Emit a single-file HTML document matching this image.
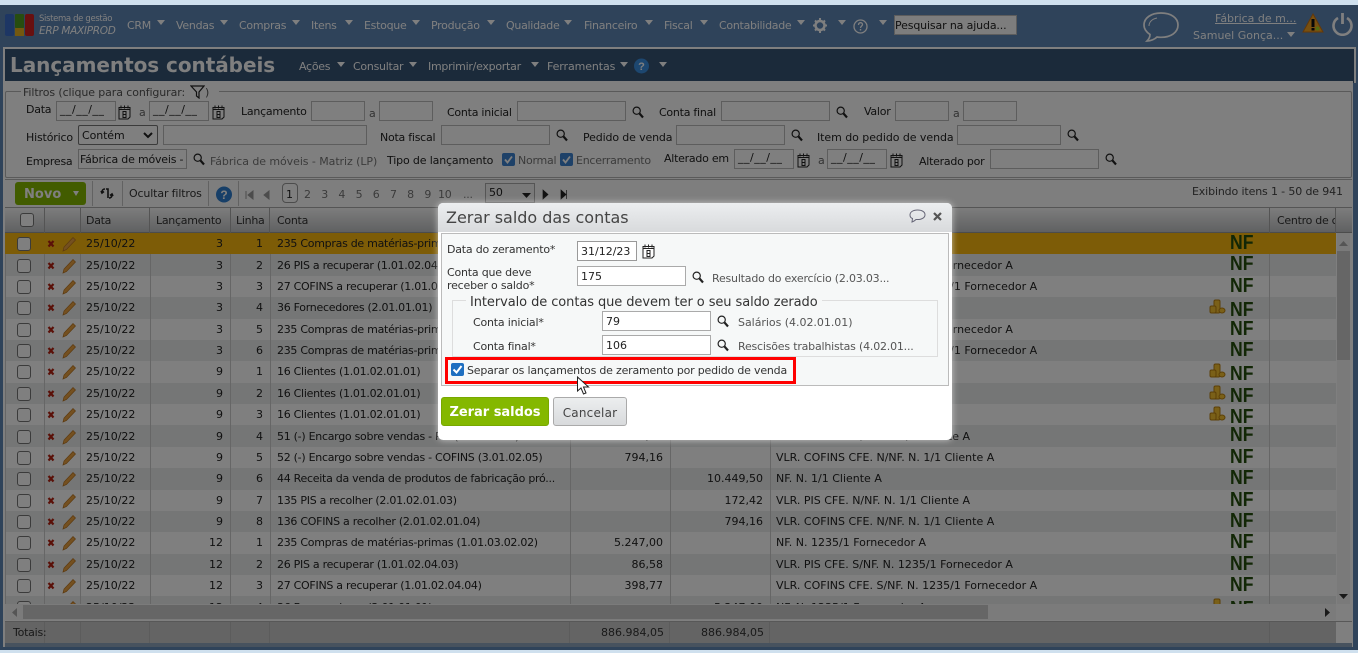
<!DOCTYPE html>
<html lang="pt"><head><meta charset="utf-8"><title>Lançamentos contábeis</title>
<style>
html,body{margin:0;padding:0;width:1358px;height:653px;overflow:hidden;background:#cfe0ee;font-family:"DejaVu Sans","Liberation Sans",sans-serif;font-size:11px;color:#222}
*{box-sizing:border-box}
.a,.i,.v,svg.s{position:absolute}
.a{white-space:nowrap;line-height:16px;letter-spacing:-.25px}
.i{background:#fff;border:1px solid #bbb;height:20px;padding:2px 3px 0;line-height:16px;letter-spacing:-.1px;white-space:nowrap;overflow:hidden}
.dt{padding-top:0;padding-left:3px;letter-spacing:.5px}
.v{width:0;height:0;border:4px solid transparent;border-top:5px solid #fff;border-bottom:0}
#nav{position:absolute;left:0;top:5px;width:1358px;height:645px;background:#5f86b4}
.m{color:#fff;top:18px;letter-spacing:-.28px}
.n{color:#fff;top:59px;letter-spacing:-.27px}
#ttl{position:absolute;left:3px;top:47px;width:1353px;height:36px;background:#365474;border:2px solid #fff;border-bottom:0}
#pan{position:absolute;left:3px;top:81px;width:1350px;height:566px;background:#fff;border-left:2px solid #fff}
#fs{position:absolute;left:5px;top:91px;width:1347px;height:87px;border:1px solid #b5b5b5;border-radius:2px}
#tb{position:absolute;left:5px;top:179px;width:1347px;height:28px;border-top:1px solid #b5b5b5;background:#fdfdfd}
.sp{position:absolute;top:181px;width:1px;height:25px;background:#c4c4c4}
#hd{position:absolute;left:5px;top:207px;width:1347px;height:26px;background:linear-gradient(#fafafa,#c0c2c4);border-top:1px solid #aaa;border-bottom:1px solid #999}
.hl{position:absolute;top:0;width:1px;height:25px;background:#a8a8a8}
.h{top:213px;color:#333;letter-spacing:-.28px}
#wrap{position:absolute;left:5px;top:233px;width:1331px;height:371px;overflow:hidden}
table{border-collapse:collapse;table-layout:fixed;width:1331px}
tr{height:21.38px}
td{padding:1px 6px 0;white-space:nowrap;overflow:hidden;border-left:1px solid #ccc;line-height:14px;letter-spacing:-.28px;position:relative}
td:nth-child(3){padding-left:5px;letter-spacing:0}
td.r{text-align:right;letter-spacing:0;padding-right:7px}
td.q{overflow:visible;letter-spacing:0;padding-left:5px}
tr:nth-child(even){background:#eaecec}
tr:nth-child(odd){background:#fff}
tr.y{background:#fab80f!important}
tr.y td{border-color:#fab80f}
td i{display:block;width:14px;height:14px;border:1px solid #777;border-radius:3px;background:#fff;margin-left:5px}
td svg{display:block;margin-left:-6px}
td b{position:absolute;left:459px;top:0;font:bold 20px/20px "Liberation Sans",sans-serif;color:#244f0c;transform:scaleX(.88);transform-origin:0 0}
td b.l{top:3px}
td svg.co{position:absolute;left:438px;top:2px;margin:0}
#ov{position:absolute;left:0;top:5px;width:1358px;height:645px;background:rgba(0,0,0,.5)}
#dl{position:absolute;left:438px;top:203px;width:514px;height:237px;background:#fff;border-radius:5px;box-shadow:0 0 7px rgba(255,255,255,.6)}
#dh{position:absolute;left:0;top:0;width:514px;height:29px;background:linear-gradient(#eceef0,#d8dadc);border-radius:5px 5px 0 0}
#dp{position:absolute;left:441px;top:233px;width:508px;height:153px;background:#f6f8f8;border:1px solid #bbb}
#df{position:absolute;left:452px;top:300px;width:486px;height:57px;border:1px solid #ddd}
.d{color:#333;letter-spacing:-.2px;font-size:11px;line-height:15px}
.inp{position:absolute;background:#fff;border:1px solid #aaa;height:20px;padding:0 3px;font-size:11px;line-height:19px;color:#222}
#lg{position:absolute;left:466px;top:295px;background:#f6f8f8;padding:0 4px;font-size:13px;line-height:16px;color:#333;white-space:nowrap;letter-spacing:-.08px}
</style></head><body>
<svg width="0" height="0" style="position:absolute">
<symbol id="lu" viewBox="0 0 12 13"><circle cx="4.7" cy="4.7" r="3.6" fill="none" stroke="#222" stroke-width="1.2"/><path d="M7.5 7.5L11 11.5" stroke="#222" stroke-width="2.2"/></symbol>
<symbol id="ca" viewBox="0 0 13 15"><path d="M1 2.5h11v9.5l-2 2H1z" fill="#fff" stroke="#222"/><path d="M3 .5v3M6.5 .5v3M10 .5v3M1 4.5h11" stroke="#222"/><path d="M5 6.5h3v6H5zM5 9.5h3" fill="none" stroke="#222"/></symbol>
<symbol id="act" viewBox="0 0 32 18"><path d="M3.5 6l5 5.5M8.500 6l-5 5.500" stroke="#b52010" stroke-width="2.200"/><path d="M18 16l1-4 9-9.500 2.500 2.500-9 9.500z" fill="#e8a040" stroke="#b97420" stroke-width=".7"/></symbol>
<symbol id="cn" viewBox="0 0 17 15"><rect x="5" y="1" width="6" height="13" rx="1.500" fill="#f5c030" stroke="#b98010"/><rect x="1" y="7" width="6" height="7" rx="1.500" fill="#f5c030" stroke="#b98010"/><ellipse cx="13" cy="11.500" rx="3" ry="2.500" fill="#f5c030" stroke="#b98010"/></symbol>
</svg>

<div id="nav"></div>
<svg class="s" style="left:5px;top:14px" width="29" height="23" viewBox="0 0 29 23"><rect x="0" y="0" width="9" height="22" rx="2" fill="#3a6cc8"/><rect x="10" y="0" width="9" height="14" rx="1" fill="#4e9b20"/><rect x="10" y="14" width="9" height="8" fill="#e8b020"/><rect x="20" y="0" width="9" height="22" rx="2" fill="#d02020"/></svg>
<div class="a m" style="left:39px;top:11px;font-size:8.500px;letter-spacing:-.35px">Sistema de gestão</div>
<div class="a m" style="left:39px;top:23px;font-size:10.500px;font-style:italic;letter-spacing:-.3px">ERP MAXIPROD</div>
<div class="a m" style="left:127px">CRM</div><div class="v" style="left:157px;top:20px"></div>
<div class="a m" style="left:176px">Vendas</div><div class="v" style="left:220px;top:20px"></div>
<div class="a m" style="left:239px">Compras</div><div class="v" style="left:292px;top:20px"></div>
<div class="a m" style="left:311px">Itens</div><div class="v" style="left:345px;top:20px"></div>
<div class="a m" style="left:364px">Estoque</div><div class="v" style="left:412px;top:20px"></div>
<div class="a m" style="left:431px">Produção</div><div class="v" style="left:487px;top:20px"></div>
<div class="a m" style="left:506px">Qualidade</div><div class="v" style="left:564px;top:20px"></div>
<div class="a m" style="left:584px">Financeiro</div><div class="v" style="left:645px;top:20px"></div>
<div class="a m" style="left:664px">Fiscal</div><div class="v" style="left:700px;top:20px"></div>
<div class="a m" style="left:719px">Contabilidade</div><div class="v" style="left:797px;top:20px"></div>
<svg class="s" style="left:812px;top:17px" width="16" height="17" viewBox="0 0 16 17"><circle cx="8" cy="8.500" r="4.500" fill="none" stroke="#fff" stroke-width="2.500"/><path d="M8 1v3M8 13v3M1 8.500h3M12 8.500h3M3 3.500l2 2M11 11.500l2 2M13 3.500l-2 2M5 11.500l-2 2" stroke="#fff" stroke-width="2"/></svg>
<div class="v" style="left:838px;top:20px"></div>
<svg class="s" style="left:853px;top:19px" width="15" height="15" viewBox="0 0 15 15"><circle cx="7.500" cy="7.500" r="6.500" fill="none" stroke="#fff" stroke-width="1.300"/><path d="M5.500 6c0-3 4-3 4-.5 0 1.500-2 1.500-2 3.500" fill="none" stroke="#fff" stroke-width="1.300"/><rect x="6.800" y="10" width="1.400" height="1.500" fill="#fff"/></svg>
<div class="v" style="left:879px;top:20px"></div>
<div class="i" style="left:894px;top:15px;width:123px;background:#fafafa;color:#222;padding-left:0;letter-spacing:-.14px">Pesquisar na ajuda...</div>
<svg class="s" style="left:1142px;top:11px" width="38" height="32" viewBox="0 0 38 32"><path d="M19 2C9 2 2 7 2 14c0 4 3 7.500 6 9.500 0 2-1 4.500-3 6.500 4 0 8-2 10-4 1.500.3 3 .3 4 .3 10 0 17-5 17-12.300S29 2 19 2z" fill="none" stroke="#fff" stroke-width="1.700"/><path d="M7 15c0-4 3-7 8-8" fill="none" stroke="#fff"/></svg>
<div class="a m" style="left:1215px;top:11px;text-decoration:underline;letter-spacing:0">Fábrica de m...</div>
<div class="a m" style="left:1193px;top:28px;letter-spacing:0">Samuel Gonça...</div><div class="v" style="left:1287px;top:32px"></div>
<svg class="s" style="left:1302px;top:13px" width="22" height="20" viewBox="0 0 22 20"><path d="M11 1L1 19h20z" fill="#f0a020" stroke="#c87010"/><path d="M11 6v8" stroke="#111" stroke-width="3"/><rect x="9.500" y="15" width="3" height="2.500" fill="#111"/><circle cx="15.500" cy="15.500" r="2" fill="#a8d820"/></svg>
<svg class="s" style="left:1331px;top:12px" width="23" height="24" viewBox="0 0 23 24"><path d="M7 6a9 9 0 1 0 9 0" fill="none" stroke="#fff" stroke-width="2.600"/><path d="M11.500 1v11" stroke="#fff" stroke-width="2.800"/></svg>

<div id="ttl"></div>
<div class="a" style="left:10px;top:52px;font-size:20px;line-height:26px;font-weight:bold;color:#fff;letter-spacing:-.05px">Lançamentos contábeis</div>
<div class="a n" style="left:299px">Ações</div><div class="v" style="left:337px;top:62px"></div>
<div class="a n" style="left:353px">Consultar</div><div class="v" style="left:409px;top:62px"></div>
<div class="a n" style="left:428px">Imprimir/exportar</div><div class="v" style="left:531px;top:62px"></div>
<div class="a n" style="left:547px;letter-spacing:-.1px">Ferramentas</div><div class="v" style="left:620px;top:62px"></div>
<svg class="s" style="left:634px;top:58px" width="15" height="16" viewBox="0 0 15 16"><circle cx="7.500" cy="8" r="7.500" fill="#3a8ee0"/><text x="7.500" y="12" font-size="11" font-weight="bold" fill="#fff" text-anchor="middle" font-family="Liberation Sans">?</text></svg>
<div class="v" style="left:659px;top:62px"></div>

<div id="pan"></div>
<div id="fs"></div>
<div class="a" style="left:21px;top:85px;background:#fff;padding:0 2px;width:198px;height:14px;color:#555;letter-spacing:-.1px">Filtros (clique para configurar:</div>
<svg class="s" style="left:190px;top:85px" width="15" height="14" viewBox="0 0 15 14"><path d="M1 1h13L9 7v6L6.500 11V7z" fill="none" stroke="#222" stroke-width="1.200"/></svg>
<div class="a" style="left:205px;top:85px;color:#555">)</div>

<div class="a" style="left:26px;top:102px">Data</div>
<div class="i dt" style="left:56px;top:101px;width:60px">__/__/__</div><svg class="s" style="left:118px;top:105px" width="13" height="15"><use href="#ca"/></svg>
<div class="a" style="left:139px;top:105px;color:#666">a</div>
<div class="i dt" style="left:149px;top:101px;width:60px">__/__/__</div><svg class="s" style="left:212px;top:105px" width="13" height="15"><use href="#ca"/></svg>
<div class="a" style="left:241px;top:104px">Lançamento</div>
<div class="i" style="left:311px;top:101px;width:54px"></div><div class="a" style="left:369px;top:106px;color:#666">a</div><div class="i" style="left:379px;top:101px;width:54px"></div>
<div class="a" style="left:447px;top:105px">Conta inicial</div>
<div class="i" style="left:517px;top:101px;width:109px"></div><svg class="s" style="left:632px;top:106px" width="12" height="13"><use href="#lu"/></svg>
<div class="a" style="left:659px;top:105px">Conta final</div>
<div class="i" style="left:721px;top:101px;width:109px"></div><svg class="s" style="left:836px;top:106px" width="12" height="13"><use href="#lu"/></svg>
<div class="a" style="left:864px;top:104px">Valor</div>
<div class="i" style="left:895px;top:101px;width:54px"></div><div class="a" style="left:953px;top:106px;color:#666">a</div><div class="i" style="left:963px;top:101px;width:54px"></div>

<div class="a" style="left:26px;top:130px;letter-spacing:-.17px">Histórico</div>
<div class="i" style="left:78px;top:125px;width:80px;border-color:#777;border-radius:2px">Contém</div>
<svg class="s" style="left:143px;top:132px" width="10" height="7"><path d="M1 1l4 4 4-4" fill="none" stroke="#222" stroke-width="2"/></svg>
<div class="i" style="left:163px;top:125px;width:204px"></div>
<div class="a" style="left:380px;top:130px">Nota fiscal</div>
<div class="i" style="left:441px;top:125px;width:109px"></div><svg class="s" style="left:556px;top:129px" width="12" height="13"><use href="#lu"/></svg>
<div class="a" style="left:583px;top:130px;letter-spacing:-.14px">Pedido de venda</div>
<div class="i" style="left:676px;top:125px;width:109px"></div><svg class="s" style="left:791px;top:129px" width="12" height="13"><use href="#lu"/></svg>
<div class="a" style="left:817px;top:130px;letter-spacing:-.06px">Item do pedido de venda</div>
<div class="i" style="left:957px;top:125px;width:104px"></div><svg class="s" style="left:1067px;top:129px" width="12" height="13"><use href="#lu"/></svg>

<div class="a" style="left:26px;top:154px">Empresa</div>
<div class="i" style="left:78px;top:149px;width:109px;padding-left:1px;letter-spacing:-.2px">Fábrica de móveis - Matriz</div><svg class="s" style="left:193px;top:153px" width="12" height="13"><use href="#lu"/></svg>
<div class="a" style="left:210px;top:154px;color:#777;letter-spacing:-.07px">Fábrica de móveis - Matriz (LP)</div>
<div class="a" style="left:387px;top:153px;letter-spacing:-.15px">Tipo de lançamento</div>
<svg class="s" style="left:502px;top:153px" width="13" height="13"><rect width="13" height="13" rx="2" fill="#3c82d0"/><path d="M3 6.500l2.500 3L10 3.500" fill="none" stroke="#fff" stroke-width="1.800"/></svg>
<div class="a" style="left:518px;top:153px;color:#777">Normal</div>
<svg class="s" style="left:560px;top:153px" width="13" height="13"><rect width="13" height="13" rx="2" fill="#3c82d0"/><path d="M3 6.500l2.500 3L10 3.500" fill="none" stroke="#fff" stroke-width="1.800"/></svg>
<div class="a" style="left:576px;top:153px;color:#777">Encerramento</div>
<div class="a" style="left:664px;top:151px">Alterado em</div>
<div class="i dt" style="left:734px;top:149px;width:60px">__/__/__</div><svg class="s" style="left:797px;top:153px" width="13" height="15"><use href="#ca"/></svg>
<div class="a" style="left:818px;top:153px;color:#666">a</div>
<div class="i dt" style="left:827px;top:149px;width:60px">__/__/__</div><svg class="s" style="left:890px;top:153px" width="13" height="15"><use href="#ca"/></svg>
<div class="a" style="left:919px;top:154px">Alterado por</div>
<div class="i" style="left:990px;top:149px;width:109px"></div><svg class="s" style="left:1105px;top:153px" width="12" height="13"><use href="#lu"/></svg>

<div id="tb"></div>
<div class="a" style="left:15px;top:182px;width:71px;height:23px;background:#84b800;border-radius:3px"></div>
<div class="a" style="left:24px;top:187px;font-weight:bold;font-size:13px;color:#fff;letter-spacing:.05px">Novo</div>
<div class="v" style="left:73px;top:191px;border-width:3px;border-top-width:5px;border-bottom-width:0"></div>
<div class="sp" style="left:92px"></div>
<svg class="s" style="left:100px;top:187px" width="14" height="13" viewBox="0 0 14 13"><path d="M5 2C3 2 2 3.500 2 5M1 4l1 2 2-1.500M9 11c2 0 3-1.500 3-3M13 9l-1-2-2 1.500M6 2h2v9" fill="none" stroke="#222" stroke-width="1.600"/></svg>
<div class="sp" style="left:122px"></div>
<div class="a" style="left:129px;top:186px;color:#333;letter-spacing:-.14px">Ocultar filtros</div>
<div class="sp" style="left:208px"></div>
<svg class="s" style="left:216px;top:186px" width="16" height="17" viewBox="0 0 16 17"><circle cx="8" cy="8.500" r="8" fill="#2f7fd0"/><text x="8" y="13" font-size="12" font-weight="bold" fill="#fff" text-anchor="middle" font-family="Liberation Sans">?</text></svg>
<div class="sp" style="left:238px"></div>
<svg class="s" style="left:245px;top:190px" width="26" height="10" viewBox="0 0 26 10"><path d="M1 1v8M8 1L3 5l5 4zM24 1l-5 4 5 4z" fill="#999" stroke="#999"/></svg>
<div class="a" style="left:282px;top:183px;width:16px;height:20px;border:1px solid #999;border-radius:4px;background:#fff"></div>
<div class="a" style="left:286px;top:187px">1</div>
<div class="a" style="left:304px;top:187px;color:#777;word-spacing:6.700px;letter-spacing:0;font-size:11px">2 3 4 5 6 7 8 9</div>
<div class="a" style="left:438px;top:187px;color:#777">10</div><div class="a" style="left:463px;top:187px;color:#777">...</div>
<div class="i" style="left:485px;top:183px;width:50px;background:#f4f4f4;border-color:#aaa;padding-top:1px">50</div>
<svg class="s" style="left:522px;top:192px" width="9" height="6"><path d="M0 1h9L4.500 6z" fill="#222"/></svg>
<svg class="s" style="left:541px;top:189px" width="26" height="11" viewBox="0 0 26 11"><path d="M2 1l5 4.500-5 4.500zM20 1l5 4.500-5 4.500zM25.500 1v9" fill="#222" stroke="#222" stroke-width=".7"/></svg>
<div class="a" style="left:1192px;top:184px;color:#444;letter-spacing:-.14px">Exibindo itens 1 - 50 de 941</div>

<div id="hd"><div class="hl" style="left:39px"></div><div class="hl" style="left:75px"></div><div class="hl" style="left:144px"></div><div class="hl" style="left:225px"></div><div class="hl" style="left:264px"></div><div class="hl" style="left:1264px"></div><div class="hl" style="left:1330px"></div></div>
<i class="a" style="left:20px;top:213px;width:14px;height:14px;border:1px solid #777;border-radius:3px;background:#fff"></i>
<div class="a h" style="left:86px">Data</div><div class="a h" style="left:156px">Lançamento</div><div class="a h" style="left:236px">Linha</div><div class="a h" style="left:277px">Conta</div><div class="a h" style="left:1277px;width:58px;overflow:hidden">Centro de custo</div>

<div id="wrap"><table>
<colgroup><col style="width:39px"><col style="width:36px"><col style="width:70px"><col style="width:80px"><col style="width:40px"><col style="width:300px"><col style="width:100px"><col style="width:100px"><col style="width:499px"><col style="width:67px"></colgroup>
<tr class="y"><td><i></i></td><td><svg width="32" height="18"><use href="#act"/></svg></td><td>25/10/22</td><td class="r">3</td><td class="r">1</td><td>235 Compras de matérias-primas (1.01.03.02.02)</td><td class="r">5.247,00</td><td></td><td class="q">NF. N. 1235/1 Fornecedor A<b>NF</b></td><td></td></tr>
<tr><td><i></i></td><td><svg width="32" height="18"><use href="#act"/></svg></td><td>25/10/22</td><td class="r">3</td><td class="r">2</td><td>26 PIS a recuperar (1.01.02.04.03)</td><td class="r">86,58</td><td></td><td class="q">VLR. PIS CFE. S/NF. N. 1235/1 Fornecedor A<b>NF</b></td><td></td></tr>
<tr><td><i></i></td><td><svg width="32" height="18"><use href="#act"/></svg></td><td>25/10/22</td><td class="r">3</td><td class="r">3</td><td>27 COFINS a recuperar (1.01.02.04.04)</td><td class="r">398,77</td><td></td><td class="q">VLR. COFINS CFE. S/NF. N. 1235/1 Fornecedor A<b>NF</b></td><td></td></tr>
<tr><td><i></i></td><td><svg width="32" height="18"><use href="#act"/></svg></td><td>25/10/22</td><td class="r">3</td><td class="r">4</td><td>36 Fornecedores (2.01.01.01)</td><td></td><td class="r">5.247,00</td><td class="q">NF. N. 1235/1 Fornecedor A<svg class="co" width="17" height="15"><use href="#cn"/></svg><b class="l">NF</b></td><td></td></tr>
<tr><td><i></i></td><td><svg width="32" height="18"><use href="#act"/></svg></td><td>25/10/22</td><td class="r">3</td><td class="r">5</td><td>235 Compras de matérias-primas (1.01.03.02.02)</td><td></td><td class="r">86,58</td><td class="q">VLR. PIS CFE. S/NF. N. 1235/1 Fornecedor A<b>NF</b></td><td></td></tr>
<tr><td><i></i></td><td><svg width="32" height="18"><use href="#act"/></svg></td><td>25/10/22</td><td class="r">3</td><td class="r">6</td><td>235 Compras de matérias-primas (1.01.03.02.02)</td><td></td><td class="r">398,77</td><td class="q">VLR. COFINS CFE. S/NF. N. 1235/1 Fornecedor A<b>NF</b></td><td></td></tr>
<tr><td><i></i></td><td><svg width="32" height="18"><use href="#act"/></svg></td><td>25/10/22</td><td class="r">9</td><td class="r">1</td><td>16 Clientes (1.01.02.01.01)</td><td class="r">10.449,50</td><td></td><td class="q">NF. N. 1/1 Cliente A<svg class="co" width="17" height="15"><use href="#cn"/></svg><b class="l">NF</b></td><td></td></tr>
<tr><td><i></i></td><td><svg width="32" height="18"><use href="#act"/></svg></td><td>25/10/22</td><td class="r">9</td><td class="r">2</td><td>16 Clientes (1.01.02.01.01)</td><td></td><td class="r">172,42</td><td class="q">NF. N. 1/1 Cliente A<svg class="co" width="17" height="15"><use href="#cn"/></svg><b class="l">NF</b></td><td></td></tr>
<tr><td><i></i></td><td><svg width="32" height="18"><use href="#act"/></svg></td><td>25/10/22</td><td class="r">9</td><td class="r">3</td><td>16 Clientes (1.01.02.01.01)</td><td></td><td class="r">794,16</td><td class="q">NF. N. 1/1 Cliente A<svg class="co" width="17" height="15"><use href="#cn"/></svg><b class="l">NF</b></td><td></td></tr>
<tr><td><i></i></td><td><svg width="32" height="18"><use href="#act"/></svg></td><td>25/10/22</td><td class="r">9</td><td class="r">4</td><td>51 (-) Encargo sobre vendas - PIS (3.01.02.04)</td><td class="r">172,42</td><td></td><td class="q">VLR. PIS CFE. N/NF. N. 1/1 Cliente A<b>NF</b></td><td></td></tr>
<tr><td><i></i></td><td><svg width="32" height="18"><use href="#act"/></svg></td><td>25/10/22</td><td class="r">9</td><td class="r">5</td><td>52 (-) Encargo sobre vendas - COFINS (3.01.02.05)</td><td class="r">794,16</td><td></td><td class="q">VLR. COFINS CFE. N/NF. N. 1/1 Cliente A<b>NF</b></td><td></td></tr>
<tr><td><i></i></td><td><svg width="32" height="18"><use href="#act"/></svg></td><td>25/10/22</td><td class="r">9</td><td class="r">6</td><td>44 Receita da venda de produtos de fabricação pró...</td><td></td><td class="r">10.449,50</td><td class="q">NF. N. 1/1 Cliente A<b>NF</b></td><td></td></tr>
<tr><td><i></i></td><td><svg width="32" height="18"><use href="#act"/></svg></td><td>25/10/22</td><td class="r">9</td><td class="r">7</td><td>135 PIS a recolher (2.01.02.01.03)</td><td></td><td class="r">172,42</td><td class="q">VLR. PIS CFE. N/NF. N. 1/1 Cliente A<b>NF</b></td><td></td></tr>
<tr><td><i></i></td><td><svg width="32" height="18"><use href="#act"/></svg></td><td>25/10/22</td><td class="r">9</td><td class="r">8</td><td>136 COFINS a recolher (2.01.02.01.04)</td><td></td><td class="r">794,16</td><td class="q">VLR. COFINS CFE. N/NF. N. 1/1 Cliente A<b>NF</b></td><td></td></tr>
<tr><td><i></i></td><td><svg width="32" height="18"><use href="#act"/></svg></td><td>25/10/22</td><td class="r">12</td><td class="r">1</td><td>235 Compras de matérias-primas (1.01.03.02.02)</td><td class="r">5.247,00</td><td></td><td class="q">NF. N. 1235/1 Fornecedor A<b>NF</b></td><td></td></tr>
<tr><td><i></i></td><td><svg width="32" height="18"><use href="#act"/></svg></td><td>25/10/22</td><td class="r">12</td><td class="r">2</td><td>26 PIS a recuperar (1.01.02.04.03)</td><td class="r">86,58</td><td></td><td class="q">VLR. PIS CFE. S/NF. N. 1235/1 Fornecedor A<b>NF</b></td><td></td></tr>
<tr><td><i></i></td><td><svg width="32" height="18"><use href="#act"/></svg></td><td>25/10/22</td><td class="r">12</td><td class="r">3</td><td>27 COFINS a recuperar (1.01.02.04.04)</td><td class="r">398,77</td><td></td><td class="q">VLR. COFINS CFE. S/NF. N. 1235/1 Fornecedor A<b>NF</b></td><td></td></tr>
<tr><td><i></i></td><td><svg width="32" height="18"><use href="#act"/></svg></td><td>25/10/22</td><td class="r">12</td><td class="r">4</td><td>36 Fornecedores (2.01.01.01)</td><td></td><td class="r">5.247,00</td><td class="q">NF. N. 1235/1 Fornecedor A<svg class="co" width="17" height="15"><use href="#cn"/></svg><b class="l">NF</b></td><td></td></tr>
</table></div>

<div class="a" style="left:1337px;top:233px;width:13px;height:371px;background:#f4f4f4"></div>
<div class="a" style="left:1337px;top:251px;width:13px;height:109px;background:#ccc"></div>
<svg class="s" style="left:1339px;top:241px" width="9" height="5"><path d="M0 5h9L4.500 0z" fill="#aaa"/></svg>
<svg class="s" style="left:1339px;top:594px" width="9" height="5"><path d="M0 0h9L4.500 5z" fill="#333"/></svg>
<div class="a" style="left:5px;top:604px;width:1331px;height:16px;background:#f6f6f6"></div>
<div class="a" style="left:23px;top:605px;width:965px;height:14px;background:#ccc"></div>
<svg class="s" style="left:12px;top:608px" width="5" height="9"><path d="M5 0v9L0 4.500z" fill="#aaa"/></svg>
<svg class="s" style="left:1325px;top:608px" width="5" height="9"><path d="M0 0v9l5-4.500z" fill="#333"/></svg>

<div class="a" style="left:5px;top:621px;width:1347px;height:22px;background:#c8c8c8;border-top:1px solid #b0b0b0"></div>
<div class="a" style="left:1336px;top:622px;width:16px;height:21px;background:#fff"></div>
<div class="a" style="left:44px;top:622px;width:1px;height:21px;background:#b8b8b8"></div><div class="a" style="left:80px;top:622px;width:1px;height:21px;background:#b8b8b8"></div><div class="a" style="left:149px;top:622px;width:1px;height:21px;background:#b8b8b8"></div><div class="a" style="left:230px;top:622px;width:1px;height:21px;background:#b8b8b8"></div><div class="a" style="left:269px;top:622px;width:1px;height:21px;background:#b8b8b8"></div><div class="a" style="left:569px;top:622px;width:1px;height:21px;background:#b8b8b8"></div><div class="a" style="left:669px;top:622px;width:1px;height:21px;background:#b8b8b8"></div><div class="a" style="left:769px;top:622px;width:1px;height:21px;background:#b8b8b8"></div><div class="a" style="left:1269px;top:622px;width:1px;height:21px;background:#b8b8b8"></div>
<div class="a" style="left:13px;top:625px;color:#333">Totais:</div>
<div class="a" style="left:601px;top:625px;color:#333;letter-spacing:0">886.984,05</div><div class="a" style="left:701px;top:625px;color:#333;letter-spacing:0">886.984,05</div>
<div class="a" style="left:5px;top:643px;width:1347px;height:4px;background:#8ea4bc"></div>

<div id="ov"></div>

<div id="dl"><div id="dh"></div></div>
<div class="a" style="left:446px;top:208px;font-size:16px;line-height:20px;color:#444;letter-spacing:-.02px">Zerar saldo das contas</div>
<svg class="s" style="left:909px;top:209px" width="17" height="14" viewBox="0 0 17 14"><path d="M8.500 1C4 1 1 3 1 6c0 1.500 1 3 2.500 3.500L3 13c1.500-.5 3-1.500 4-2.500h1.500C13 10.500 16 8.500 16 5.700S13 1 8.500 1z" fill="none" stroke="#667" stroke-width="1"/></svg>
<svg class="s" style="left:933px;top:212px" width="9" height="9"><path d="M1 1l7 7M8 1L1 8" stroke="#555" stroke-width="2.200"/></svg>
<div id="dp"></div><div id="df"></div>
<div class="a d" style="left:447px;top:242px">Data do zeramento*</div>
<div class="inp" style="left:577px;top:241px;width:60px;border-color:#999">31/12/23</div>
<svg class="s" style="left:642px;top:244px" width="13" height="15"><use href="#ca"/></svg>
<div class="a d" style="left:447px;top:266px;line-height:13px">Conta que deve<br>receber o saldo*</div>
<div class="inp" style="left:577px;top:266px;width:109px">175</div>
<svg class="s" style="left:692px;top:271px" width="12" height="13"><use href="#lu"/></svg>
<div class="a d" style="left:712px;top:271px;color:#555">Resultado do exercício (2.03.03...</div>
<div id="lg">Intervalo de contas que devem ter o seu saldo zerado</div>
<div class="a d" style="left:473px;top:315px">Conta inicial*</div>
<div class="inp" style="left:602px;top:311px;width:109px">79</div>
<svg class="s" style="left:717px;top:315px" width="12" height="13"><use href="#lu"/></svg>
<div class="a d" style="left:738px;top:315px;color:#555;letter-spacing:-.03px">Salários (4.02.01.01)</div>
<div class="a d" style="left:473px;top:339px">Conta final*</div>
<div class="inp" style="left:602px;top:335px;width:109px">106</div>
<svg class="s" style="left:717px;top:339px" width="12" height="13"><use href="#lu"/></svg>
<div class="a d" style="left:738px;top:339px;color:#555">Rescisões trabalhistas (4.02.01...</div>
<div class="a" style="left:445px;top:357px;width:351px;height:27px;border:3px solid #f00"></div>
<svg class="s" style="left:451px;top:363px" width="13" height="13"><rect width="13" height="13" rx="2" fill="#1f6fc0"/><path d="M2.500 6.500l3 3L10.500 3" fill="none" stroke="#fff" stroke-width="2"/></svg>
<div class="a d" style="left:467px;top:363px">Separar os lançamentos de zeramento por pedido de venda</div>
<svg class="s" style="left:576px;top:376px" width="14" height="19" viewBox="0 0 14 19"><path d="M1.500 1v14l3.500-3 2.500 6 2.500-1-2.500-6h5z" fill="#fff" stroke="#222"/></svg>
<div class="a" style="left:441px;top:397px;width:108px;height:29px;background:#84b800;border:1px solid #78a800;border-radius:3px;text-align:center;font-weight:bold;font-size:13px;line-height:30px;color:#fff;letter-spacing:-.02px">Zerar saldos</div>
<div class="a" style="left:553px;top:397px;width:74px;height:29px;background:linear-gradient(#eceeef,#d8dadc);border:1px solid #aaa;border-radius:3px;text-align:center;font-size:12px;line-height:30px;color:#444;letter-spacing:.2px">Cancelar</div>
</body></html>
